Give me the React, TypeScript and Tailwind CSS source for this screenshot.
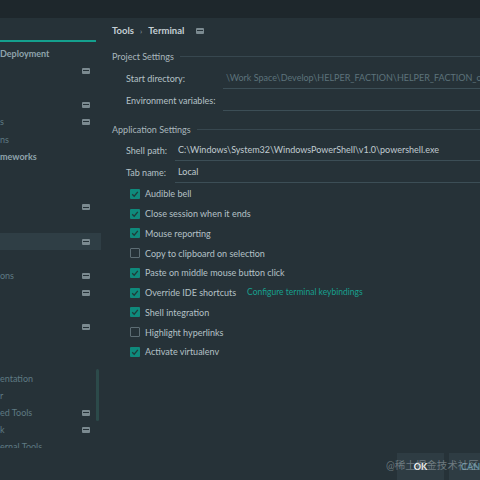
import type { ReactNode } from 'react';

const sidebar: { text?: string; bold?: boolean; dim?: boolean; icon?: boolean; selected?: boolean }[] = [
  { text: 'Deployment', bold: true },
  { icon: true },
  {},
  { icon: true },
  { text: 's', dim: true, icon: true },
  { text: 'ns', dim: true },
  { text: 'meworks', bold: true },
  {},
  {},
  { icon: true },
  {},
  { selected: true, icon: true },
  {},
  { text: 'ons', dim: true, icon: true },
  { icon: true },
  {},
  { icon: true },
  {},
  {},
  { text: 'entation', dim: true },
  { text: 'r', dim: true },
  { text: 'ed Tools', dim: true, icon: true },
  { text: 'k', dim: true, icon: true },
  { text: 'ernal Tools', dim: true },
];

const checks: { label: string; on: boolean; link?: string }[] = [
  { label: 'Audible bell', on: true },
  { label: 'Close session when it ends', on: true },
  { label: 'Mouse reporting', on: true },
  { label: 'Copy to clipboard on selection', on: false },
  { label: 'Paste on middle mouse button click', on: true },
  { label: 'Override IDE shortcuts', on: true, link: 'Configure terminal keybindings' },
  { label: 'Shell integration', on: true },
  { label: 'Highlight hyperlinks', on: false },
  { label: 'Activate virtualenv', on: true },
];

function ScopeIcon() {
  return (
    <span className="flex h-[6px] w-[8px] flex-col justify-center rounded-[1px] bg-[#7b8a90]">
      <span className="mx-[1px] h-[1px] bg-[#263238]" />
    </span>
  );
}

function Check({ on }: { on: boolean }) {
  if (!on) return <span className="h-[10px] w-[10px] shrink-0 rounded-[1px] border border-[#5d6d74]" />;
  return (
    <span className="flex h-[10px] w-[10px] shrink-0 items-center justify-center rounded-[1px] bg-[#0f8a7c]">
      <svg viewBox="0 0 10 10" className="h-[10px] w-[10px]">
        <path d="M2.2 5.2 L4.2 7.2 L7.8 2.8" fill="none" stroke="#1f3b3a" strokeWidth="1.3" />
      </svg>
    </span>
  );
}

function Section({ title }: { title: string }) {
  return (
    <div className="flex h-[12px] items-center gap-[6px] text-[#a9b7bd]">
      <span className="shrink-0">{title}</span>
      <span className="h-px flex-1 bg-[#37474f]" />
    </div>
  );
}

function Field({ label, labelW, children }: { label: string; labelW: string; children?: ReactNode }) {
  return (
    <div className="flex h-[22px] items-center pl-[14px]">
      <span className={`${labelW} shrink-0 whitespace-nowrap text-[#b4c1c6]`}>{label}</span>
      <div className="flex h-full min-w-0 flex-1 items-center overflow-hidden whitespace-nowrap border-b border-[#3c4e56] pl-[3px]">
        {children}
      </div>
    </div>
  );
}

export default function App() {
  return (
    <div
      className="relative flex h-[480px] w-[480px] flex-col overflow-hidden bg-[#263238] text-[9px] leading-none"
      style={{ fontFamily: 'Lato, "Noto Sans CJK SC", sans-serif' }}
    >
      <div className="h-[18px] shrink-0 bg-[#1e272c]" />
      <div className="flex min-h-0 flex-1">
        <aside className="flex w-[101px] shrink-0 flex-col">
          <div className="mr-[5px] h-[24px] shrink-0 border-b-2 border-[#14a08e]" />
          <div className="relative mt-[3px] h-[403px] overflow-hidden">
            {sidebar.map((r, i) => (
              <div
                key={i}
                className={`flex h-[17.1px] items-center justify-between pr-[11px] ${r.selected ? 'bg-[#2f3e45]' : ''}`}
              >
                <span
                  className={
                    r.bold ? 'font-bold text-[#8fa4ac]' : r.dim ? 'text-[#5f7a83]' : 'text-[#b4c1c6]'
                  }
                >
                  {r.text}
                </span>
                {r.icon && <ScopeIcon />}
              </div>
            ))}
            <span className="absolute right-[2px] top-[324px] h-[52px] w-[3px] rounded bg-[#2c4a4a]" />
          </div>
        </aside>

        <main className="flex min-w-0 flex-1 flex-col pl-[11px]">
          <div className="flex h-[24px] items-center gap-[6px] pt-[1px] text-[9.5px] font-bold text-[#c4cfd4]">
            <span>Tools</span>
            <span className="text-[8px] font-normal text-[#8b9ba2]">›</span>
            <span>Terminal</span>
            <span className="ml-[6px]">
              <ScopeIcon />
            </span>
          </div>

          <div className="mt-[8px]">
            <Section title="Project Settings" />
          </div>
          <div className="mt-[5px]">
            <Field label="Start directory:" labelW="w-[97px]">
              <span className="text-[#5d737b]">\Work Space\Develop\HELPER_FACTION\HELPER_FACTION_office</span>
            </Field>
            <Field label="Environment variables:" labelW="w-[97px]" />
          </div>

          <div className="mt-[12px]">
            <Section title="Application Settings" />
          </div>
          <div className="mt-[4px]">
            <Field label="Shell path:" labelW="w-[49px]">
              <span className="text-[#c0cbd0]">C:\Windows\System32\WindowsPowerShell\v1.0\powershell.exe</span>
            </Field>
            <Field label="Tab name:" labelW="w-[49px]">
              <span className="text-[#c0cbd0]">Local</span>
            </Field>
          </div>

          <div className="mt-[1px] flex flex-col pl-[18px]">
            {checks.map((c) => (
              <div key={c.label} className="flex h-[19.75px] items-center gap-[5px] text-[#b4c1c6]">
                <Check on={c.on} />
                <span>{c.label}</span>
                {c.link && <span className="ml-[6px] text-[8.5px] text-[#17a08e]">{c.link}</span>}
              </div>
            ))}
          </div>

          <div className="mt-auto flex justify-end gap-[5px]">
            <div className="flex h-[27px] w-[47px] items-center justify-center bg-[#2e3c43] text-[9px] font-bold text-white">
              OK
            </div>
            <div className="flex h-[27px] w-[31px] items-center overflow-hidden bg-[#2e3c43] pl-[12px] text-[9px] font-bold text-[#5f8da0]">
              CANCEL
            </div>
          </div>
        </main>
      </div>
      <span className="pointer-events-none absolute left-[386px] top-[460px] whitespace-nowrap text-[10.5px] text-[#9aa5a9]/60">
        @稀土掘金技术社区
      </span>
    </div>
  );
}
